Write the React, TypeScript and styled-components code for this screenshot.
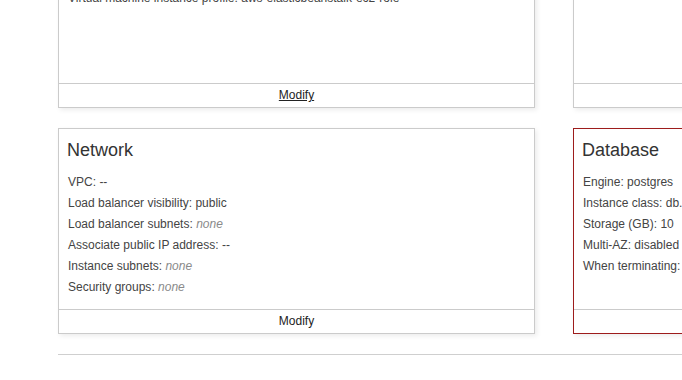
import { FC } from 'react';
import styled, { createGlobalStyle } from 'styled-components';

const GlobalStyle = createGlobalStyle`
	html, body {
		margin: 0;
		padding: 0;
		background: #fff;
		overflow: hidden;
	}
	body {
		font-family: 'Liberation Sans', Arial, Helvetica, sans-serif;
		-webkit-font-smoothing: antialiased;
	}
	* {
		box-sizing: border-box;
	}
`;

interface IRow {
	label: string;
	value: string;
	empty?: boolean;
}

interface ICardProps {
	title: string;
	rows: IRow[];
	alert?: boolean;
	modifyHover?: boolean;
	showModify?: boolean;
}

const Page = styled.div`
	width: 992px;
	margin: -98px 0 0 58px;
`;

const CardGrid = styled.div`
	display: grid;
	grid-template-columns: 477px 477px;
	column-gap: 38px;
	row-gap: 20px;
`;

const CardContainer = styled.div<{ $alert?: boolean }>`
	display: flex;
	flex-direction: column;
	background: #fff;
	border: 1px solid ${({ $alert }) => ($alert ? '#9d1c1c' : '#cbcbcb')};
	box-shadow: 2px 2px 5px rgba(0, 0, 0, 0.08);
`;

const CardBody = styled.div`
	flex: 1;
	min-height: 180px;
	padding: 11px 8px 11px 8px;
`;

const Heading = styled.h3`
	margin: 0 0 12px 0;
	font-size: 18px;
	line-height: 20px;
	font-weight: 400;
	color: #333;
`;

const RowList = styled.ul`
	margin: 0;
	padding: 0 0 0 1px;
	list-style: none;
`;

const Row = styled.li`
	font-size: 12px;
	line-height: 21px;
	color: #444;
	white-space: nowrap;
`;

const EmptyValue = styled.em`
	color: #8a8a8a;
`;

const CardFooter = styled.div`
	height: 24px;
	border-top: 1px solid #cbcbcb;
	text-align: center;
	font-size: 12px;
	line-height: 23px;
`;

const ModifyLink = styled.a<{ $hover?: boolean }>`
	color: #222;
	text-decoration: ${({ $hover }) => ($hover ? 'underline' : 'none')};
	cursor: pointer;
`;

const Divider = styled.hr`
	margin: 20px 0 0 0;
	border: none;
	border-top: 1px solid #cfcfcf;
	height: 0;
`;

const Card: FC<ICardProps> = ({
	title,
	rows,
	alert,
	modifyHover,
	showModify = true,
}) => (
	<CardContainer $alert={alert}>
		<CardBody>
			<Heading>{title}</Heading>
			<RowList>
				{rows.map((row) => (
					<Row key={row.label}>
						{row.label}:{' '}
						{row.empty ? <EmptyValue>{row.value}</EmptyValue> : row.value}
					</Row>
				))}
			</RowList>
		</CardBody>
		<CardFooter>
			{showModify && <ModifyLink $hover={modifyHover}>Modify</ModifyLink>}
		</CardFooter>
	</CardContainer>
);

const securityRows: IRow[] = [
	{ label: 'Service role', value: 'aws-elasticbeanstalk-service-role' },
	{ label: 'Virtual machine key pair', value: '--' },
	{
		label: 'Virtual machine instance profile',
		value: 'aws-elasticbeanstalk-ec2-role',
	},
];

const monitoringRows: IRow[] = [];

const networkRows: IRow[] = [
	{ label: 'VPC', value: '--' },
	{ label: 'Load balancer visibility', value: 'public' },
	{ label: 'Load balancer subnets', value: 'none', empty: true },
	{ label: 'Associate public IP address', value: '--' },
	{ label: 'Instance subnets', value: 'none', empty: true },
	{ label: 'Security groups', value: 'none', empty: true },
];

const databaseRows: IRow[] = [
	{ label: 'Engine', value: 'postgres' },
	{ label: 'Instance class', value: 'db.t2.micro' },
	{ label: 'Storage (GB)', value: '10' },
	{ label: 'Multi-AZ', value: 'disabled' },
	{ label: 'When terminating', value: 'Delete' },
];

const App: FC = () => (
	<>
		<GlobalStyle />
		<Page>
			<CardGrid>
				<Card title="Security" rows={securityRows} modifyHover />
				<Card title="Monitoring" rows={monitoringRows} showModify={false} />
				<Card title="Network" rows={networkRows} />
				<Card title="Database" rows={databaseRows} alert showModify={false} />
			</CardGrid>
			<Divider />
		</Page>
	</>
);

export default App;
